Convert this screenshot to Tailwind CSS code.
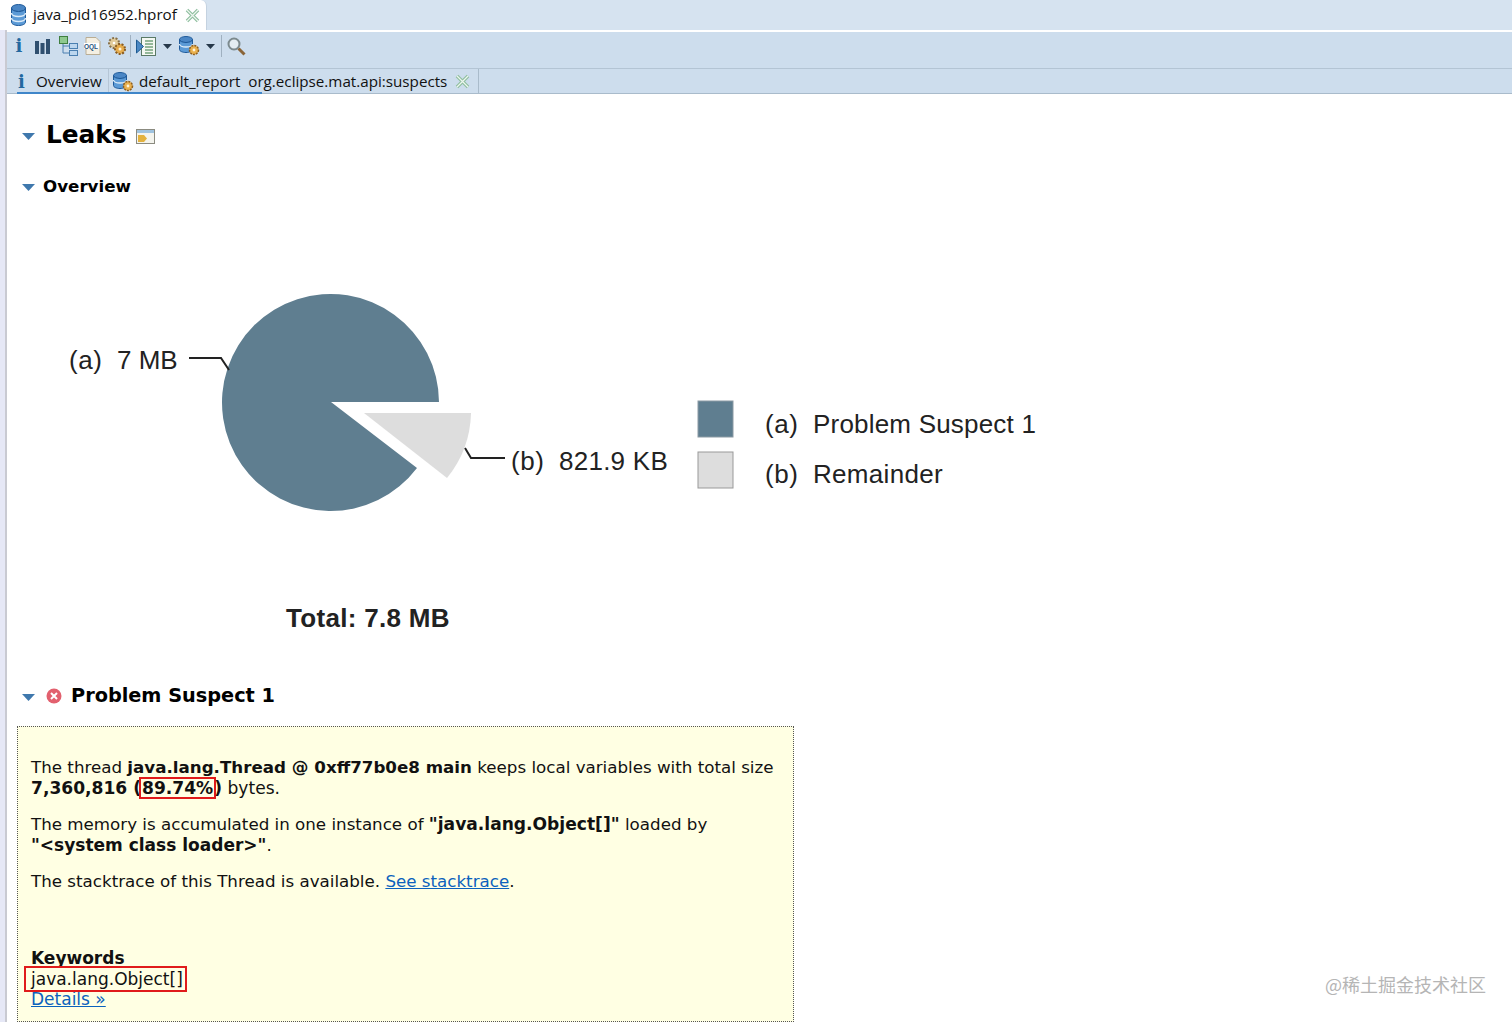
<!DOCTYPE html>
<html lang="en">
<head>
  <meta charset="UTF-8">
  <title>java_pid16952.hprof</title>
  <script src="https://cdn.jsdelivr.net/npm/@tailwindcss/browser@4"></script>
</head>
<body class="bg-white overflow-hidden">
  <div class="w-[1512px] h-[1022px] flex flex-col overflow-hidden relative font-['Open_Sans',sans-serif] text-[#111]">

    <!-- Editor tabs -->
    <div class="h-[30px] bg-[#d6e3f0] flex shrink-0">
      <div class="h-[30px] w-[207px] bg-white rounded-tr-md flex items-center pl-[10px] shrink-0 border-r border-[#c4d2e0]">
        <svg width="17" height="24" viewBox="0 0 17 24">
          <ellipse cx="8.500" cy="5" rx="7" ry="3.500" fill="#4a86c5" stroke="#1f5a9a"/>
          <path d="M1.500 5v14c0 2 3 3.500 7 3.500s7-1.500 7-3.500V5c0 2-3 3.500-7 3.500S1.500 7 1.500 5z" fill="#5b9ad6" stroke="#1f5a9a"/>
          <path d="M1.500 10c0 2 3 3.500 7 3.500s7-1.500 7-3.500M1.500 15c0 2 3 3.500 7 3.500s7-1.500 7-3.500" fill="none" stroke="#dcebf8" stroke-width="1.500"/>
        </svg>
        <span class="ml-[6px] text-[15.200px] leading-none">java_pid16952.hprof</span>
        <svg class="ml-[8px]" width="15" height="15" viewBox="0 0 15 15"><path d="M2 2l11 11M13 2L2 13" stroke="#8fbf9f" stroke-width="3.500"/><path d="M2 2l11 11M13 2L2 13" stroke="#eef6f0" stroke-width="1.200"/></svg>
      </div>
    </div>

    <div class="flex flex-1 min-h-0">
      <!-- Left gutter -->
      <div class="w-[7px] shrink-0 bg-[#e6e8f6] border-r-2 border-[#c9cad2]"></div>

      <div class="flex-1 min-w-0 flex flex-col">
        <!-- Toolbar -->
        <div class="h-[39px] bg-[#cddded] border-t-[2px] border-white flex items-center pl-[5px] pb-[8px] shrink-0 border-b border-b-[#b3c4d4]">
          <span class="w-[14px] text-center font-['DejaVu_Serif',serif] font-bold text-[18px] text-[#23689f] leading-none">i</span>
          <svg class="ml-[9px]" width="15" height="16" viewBox="0 0 15 16"><path d="M0 3h4v13H0zM5.500 5h4v11h-4zM11 1h4v15h-4z" fill="#2f4f6f"/></svg>
          <svg class="ml-[9px]" width="19" height="20" viewBox="0 0 19 20"><rect x="0.500" y="0.500" width="8" height="7" fill="#8fc98f" stroke="#3f7f3f"/><rect x="10.500" y="7.500" width="8" height="5" fill="#bcd6ee" stroke="#4a7fb0"/><rect x="10.500" y="14.500" width="8" height="5" fill="#bcd6ee" stroke="#4a7fb0"/><path d="M4 8v9h6M4 10h6" fill="none" stroke="#4a7fb0"/></svg>
          <svg class="ml-[5px]" width="18" height="18" viewBox="0 0 18 18"><path d="M3 .5h10l4 4V17.500H3z" fill="#f4efe2" stroke="#b9ad94"/><path d="M1 6h15v6H1z" fill="#fff"/><text x="1" y="12" font-size="6.500" font-weight="700" font-family="Liberation Sans" fill="#26527a">OQL</text></svg>
          <svg class="ml-[6px]" width="20" height="20" viewBox="0 0 20 20"><circle cx="7" cy="7" r="5" fill="#e2cb9a" stroke="#86704a" stroke-width="2" stroke-dasharray="2 1.500"/><circle cx="13" cy="13" r="5" fill="#e6ad4e" stroke="#8a5c22" stroke-width="2" stroke-dasharray="2 1.500"/><circle cx="13" cy="13" r="1.500" fill="#fff3d8"/><circle cx="7" cy="7" r="1.300" fill="#fff"/></svg>
          <span class="ml-[3px] w-px h-[22px] bg-[#9fb0c0]"></span>
          <svg class="ml-[5px]" width="20" height="19" viewBox="0 0 20 19"><rect x="5.500" y="0.500" width="14" height="18" fill="#f4f8f2" stroke="#5a7a66"/><path d="M9 4h8M9 7h8M9 10h8M9 13h8M9 16h8" stroke="#74a27e" stroke-width="1.500"/><path d="M.5 3l7 6.500-7 6.500z" fill="#4a88c4" stroke="#1e5a92"/></svg>
          <svg class="ml-[7px]" width="9" height="5" viewBox="0 0 9 5"><path d="M0 0h9L4.500 5z" fill="#26384a"/></svg>
          <svg class="ml-[7px]" width="21" height="20" viewBox="0 0 21 20"><ellipse cx="7" cy="3.500" rx="6.500" ry="3" fill="#4a86c5" stroke="#1f5a9a"/><path d="M.5 3.500v10c0 1.700 3 3 6.500 3s6.500-1.300 6.500-3v-10c0 1.700-3 3-6.500 3s-6.500-1.300-6.500-3z" fill="#5b9ad6" stroke="#1f5a9a"/><path d="M.5 8c0 1.700 3 3 6.500 3s6.500-1.300 6.500-3" fill="none" stroke="#dcebf8" stroke-width="1.300"/><circle cx="15" cy="14" r="4.500" fill="#eab14e" stroke="#8f5e1e" stroke-width="1.500" stroke-dasharray="2 1"/><circle cx="15" cy="14" r="1.400" fill="#fff3d8"/></svg>
          <svg class="ml-[6px]" width="9" height="5" viewBox="0 0 9 5"><path d="M0 0h9L4.500 5z" fill="#26384a"/></svg>
          <span class="ml-[6px] w-px h-[22px] bg-[#9fb0c0]"></span>
          <svg class="ml-[5px]" width="19" height="19" viewBox="0 0 19 19"><circle cx="7" cy="7" r="5.500" fill="#e4edf2" stroke="#7c8a8e" stroke-width="2"/><path d="M11.500 11.500l6 6" stroke="#8a6438" stroke-width="3"/></svg>
        </div>

        <!-- Query tabs -->
        <div class="h-[25px] bg-[#cddded] border-b border-[#a9bbcb] flex shrink-0 relative">
          <div class="flex items-center h-[24px] pt-[1px] pl-[11px] w-[102px] border-r border-[#b6c6d6] shrink-0">
            <span class="w-[6px] font-['DejaVu_Serif',serif] font-bold text-[18px] text-[#23689f] leading-none">i</span>
            <span class="ml-[12px] text-[15.200px] leading-none whitespace-nowrap">Overview</span>
          </div>
          <div class="flex items-center h-[24px] pt-[1px] pl-[4px] w-[370px] border-r border-[#a9bbcb] shrink-0">
            <svg width="21" height="20" viewBox="0 0 21 20"><ellipse cx="7" cy="3.500" rx="6.500" ry="3" fill="#4a86c5" stroke="#1f5a9a"/><path d="M.5 3.500v10c0 1.700 3 3 6.500 3s6.500-1.300 6.500-3v-10c0 1.700-3 3-6.500 3s-6.500-1.300-6.500-3z" fill="#5b9ad6" stroke="#1f5a9a"/><path d="M.5 8c0 1.700 3 3 6.500 3s6.500-1.300 6.500-3" fill="none" stroke="#dcebf8" stroke-width="1.300"/><circle cx="15" cy="14" r="4.500" fill="#eab14e" stroke="#8f5e1e" stroke-width="1.500" stroke-dasharray="2 1"/><circle cx="15" cy="14" r="1.400" fill="#fff3d8"/></svg>
            <span class="ml-[5px] text-[15.200px] leading-none whitespace-pre">default_report  org.eclipse.mat.api:suspects</span>
            <svg class="ml-[8px]" width="15" height="15" viewBox="0 0 15 15"><path d="M2 2l11 11M13 2L2 13" stroke="#8fbf9f" stroke-width="3.500"/><path d="M2 2l11 11M13 2L2 13" stroke="#eef6f0" stroke-width="1.200"/></svg>
          </div>
          <span class="absolute left-[10px] top-[23px] w-[245px] h-[2px] bg-[#3f86c9]"></span>
        </div>

        <!-- Report -->
        <div class="flex-1 min-h-0 font-['DejaVu_Sans',sans-serif] pl-[10px]">
          <div class="flex items-center h-[34px] mt-[24px]">
            <svg class="ml-[5px] mt-[2px]" width="13" height="7" viewBox="0 0 13 7"><path d="M0 0h13L6.500 7z" fill="#3f78ad"/></svg>
            <h1 class="ml-[11px] text-[24.800px] leading-none font-bold text-black">Leaks</h1>
            <svg class="ml-[9px] mt-[3px]" width="19" height="15" viewBox="0 0 19 15"><rect x="0.500" y="0.500" width="18" height="14" fill="#f4f4ee" stroke="#8b8b80"/><rect x="1" y="1" width="17" height="3" fill="#9fc3e0"/><path d="M2 6h6l3 3.500-3 3.500H2z" fill="#e3b23f"/></svg>
          </div>

          <div class="flex items-center h-[24px] mt-[22px]">
            <svg class="ml-[5px] mt-[2px]" width="13" height="7" viewBox="0 0 13 7"><path d="M0 0h13L6.500 7z" fill="#3f78ad"/></svg>
            <h2 class="ml-[8px] text-[16.700px] leading-none font-bold text-black">Overview</h2>
          </div>

          <!-- Pie chart -->
          <div class="relative h-[480px] w-[1100px] mt-px">
            <svg class="absolute left-[-17px] top-0" width="1100" height="480" viewBox="0 0 1100 480">
              <g transform="translate(0 -199)">
                <path d="M331 402L439 402A108.500 108.500 0 1 0 417 468Z" fill="#5f7e90"/>
                <path d="M364 413H471A107 107 0 0 1 447 478Z" fill="#dddddd"/>
                <path d="M189 358H221L229 370" fill="none" stroke="#222" stroke-width="2"/>
                <path d="M465 448L471 458H505" fill="none" stroke="#222" stroke-width="2"/>
                <g font-family="Liberation Sans" fill="#222" font-size="26">
                  <text x="69" y="369" letter-spacing="0.600">(a)</text>
                  <text x="117" y="369">7 MB</text>
                  <text x="511" y="470" letter-spacing="0.600">(b)</text>
                  <text x="559" y="470" letter-spacing="0.250">821.9 KB</text>
                  <text x="765" y="433" letter-spacing="0.600">(a)</text>
                  <text x="813" y="433" letter-spacing="0.200">Problem Suspect 1</text>
                  <text x="765" y="483" letter-spacing="0.600">(b)</text>
                  <text x="813" y="483" letter-spacing="0.300">Remainder</text>
                  <text x="286" y="627" font-weight="700" letter-spacing="0.300">Total: 7.8 MB</text>
                </g>
                <rect x="698" y="401" width="35" height="36" fill="#5f7e90" stroke="#8b9aa3"/>
                <rect x="698" y="452" width="35" height="36" fill="#dddddd" stroke="#999"/>
              </g>
            </svg>
          </div>

          <div class="flex items-center h-[24px] mt-[5px]">
            <svg class="ml-[5px] mt-[2px]" width="13" height="7" viewBox="0 0 13 7"><path d="M0 0h13L6.500 7z" fill="#3f78ad"/></svg>
            <svg class="ml-[11px]" width="16" height="16" viewBox="0 0 16 16"><circle cx="8" cy="8" r="7.500" fill="#e2606e"/><path d="M5 5l6 6M11 5l-6 6" stroke="#fff" stroke-width="2"/></svg>
            <h2 class="ml-[9px] text-[19.300px] leading-none font-bold text-black">Problem Suspect 1</h2>
          </div>

          <!-- Suspect box -->
          <div class="mt-[18px] w-[777px] h-[296px] bg-[#ffffe3] border border-dotted border-[#555] pl-[13px] pr-[10px] pt-[30px] text-[16.700px] leading-[20.500px] text-[#111]">
            <p>The thread <b>java.lang.Thread @ 0xff77b0e8 main</b> keeps local variables with total size<br><span class="text-[17.100px]"><b>7,360,816 (<span class="inline-block leading-[18px] outline-2 outline-[#e01b1b] px-px">89.74%</span>)</b> bytes.</span></p>
            <p class="mt-[16px]">The memory is accumulated in one instance of <b class="text-[17.100px]">"java.lang.Object[]"</b> loaded by<br><b class="text-[17px]">"&lt;system class loader&gt;"</b>.</p>
            <p class="mt-[16px]">The stacktrace of this Thread is available. <a href="#" class="text-[#0b62bd] underline">See stacktrace</a>.</p>
            <p class="mt-[56px] font-bold text-[17px]">Keywords</p>
            <p class="text-[17px] mt-px"><span class="outline-2 outline-[#e01b1b] pl-[5px] -ml-[5px] pr-[2px] py-px">java.lang.Object[]</span></p>
            <p class="text-[17px] -mt-px"><a href="#" class="text-[#0b62bd] underline">Details »</a></p>
          </div>
        </div>
      </div>
    </div>

    <!-- Watermark -->
    <span class="absolute right-[26px] top-[973px] text-[18px] leading-[22px] text-[#b5b5b5] font-['Noto_Sans_CJK_SC',sans-serif]">@稀土掘金技术社区</span>
  </div>
</body>
</html>
